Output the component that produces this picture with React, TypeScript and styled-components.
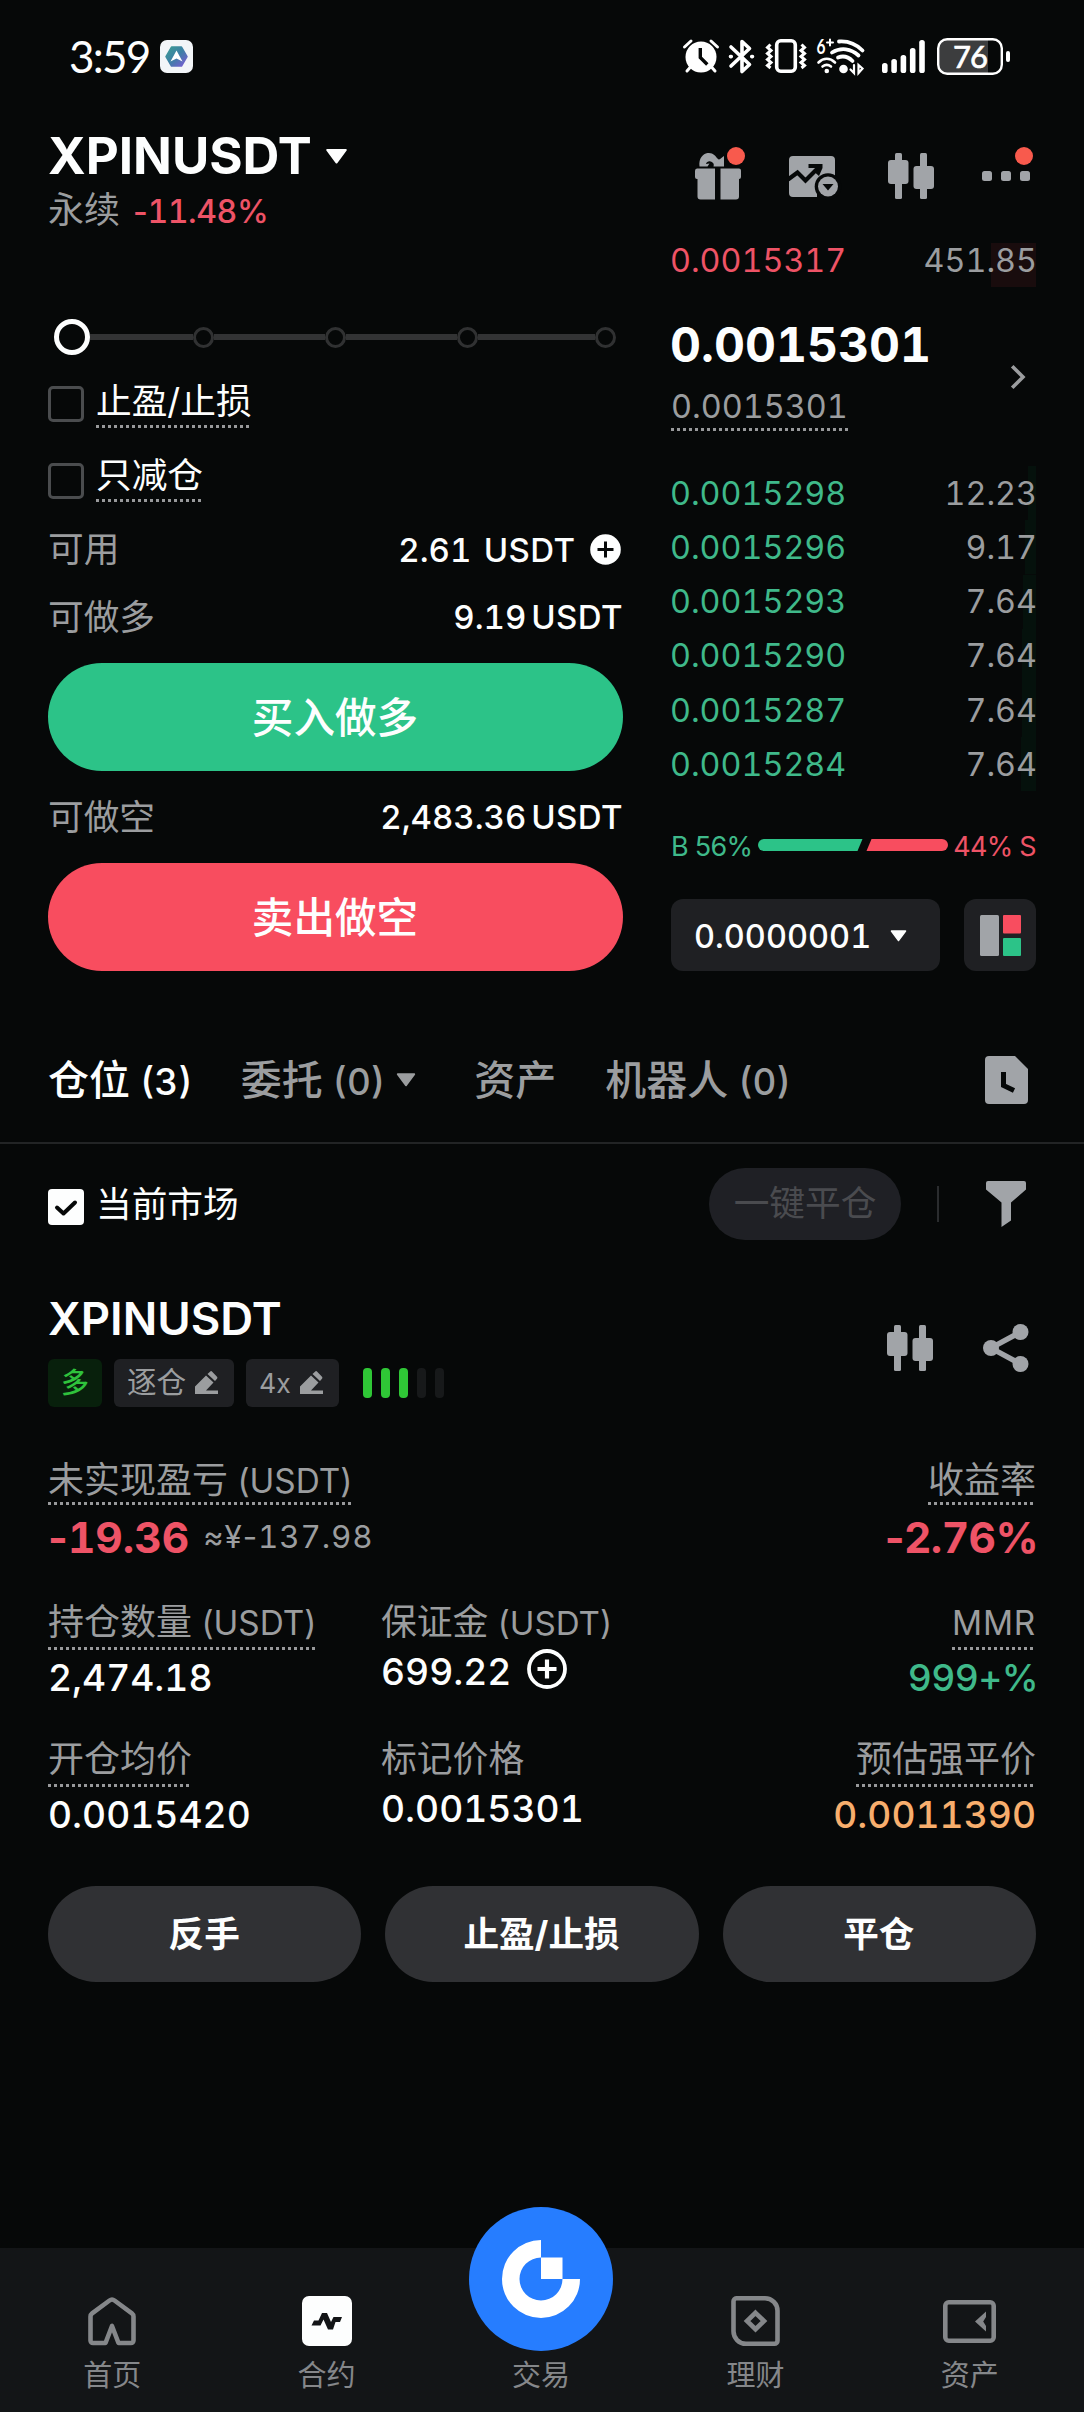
import React from "react";
import styled, { createGlobalStyle, css } from "styled-components";

const c = {
  bg: "#060808",
  white: "#fdfefe",
  grey: "#9b9d9f",
  icon: "#a1a4a8",
  green: "#2cc388",
  greenText: "#3fb98a",
  red: "#f84d5f",
  redText: "#ee5366",
  panel: "#1f2023",
  line: "#222425",
};

const GlobalStyle = createGlobalStyle`
  * { box-sizing: border-box; }
  body {
    margin: 0;
    background: ${c.bg};
    color: ${c.white};
    font-family: Inter, "Noto Sans CJK SC", sans-serif;
    font-feature-settings: "tnum";
    -webkit-font-smoothing: antialiased;
  }
  svg { display: block; flex: none; overflow: visible; }
`;

const dots = css`
  background: repeating-linear-gradient(90deg, #98999b 0 3px, transparent 3px 6px) left bottom / 100% 3px no-repeat;
`;

const Screen = styled.div`
  width: 1084px;
  height: 2412px;
  display: flex;
  flex-direction: column;
  background: ${c.bg};
  white-space: nowrap;
  overflow: hidden;
`;

/* Hyphen with its proportional width inside tabular figures. */
const Minus = styled.span`
  font-feature-settings: normal;
`;

/* ---------- status bar ---------- */
const StatusBar = styled.header`
  height: 112px;
  padding: 0 74px 0 69px;
  display: flex;
  align-items: center;
  justify-content: space-between;
`;
const StatusGroup = styled.div<{ $gap: number }>`
  display: flex;
  align-items: center;
  gap: ${(p) => p.$gap}px;
`;
const Clock = styled.span`
  font: 400 44px/56px Lato, sans-serif;
  letter-spacing: -1.8px;
  width: 81px;
`;

/* ---------- header ---------- */
const Header = styled.section`
  height: 120px;
  padding: 19px 54px 0 48px;
  display: flex;
  justify-content: space-between;
`;
const PairTitle = styled.h1`
  margin: 0;
  display: flex;
  align-items: center;
  gap: 13px;
  font-size: 51px;
  font-weight: 700;
  line-height: 50px;
`;
const PairMeta = styled.div`
  margin-top: 4px;
  display: flex;
  align-items: center;
  gap: 13px;
  font-size: 36px;
  line-height: 44px;
  color: ${c.grey};
`;
const Change = styled.span`
  font-size: 32px;
  font-weight: 500;
  letter-spacing: -0.4px;
  color: ${c.redText};
  padding-top: 5px;
`;
const HeaderIcons = styled.nav`
  height: 90px;
  display: flex;
  align-items: center;
  gap: 48.3px;
`;
const Badged = styled.span<{ $x: number; $y: number }>`
  position: relative;
  display: flex;
  &::after {
    content: "";
    position: absolute;
    left: ${(p) => p.$x}px;
    top: ${(p) => p.$y}px;
    width: 18px;
    height: 18px;
    border-radius: 50%;
    background: #f85a4d;
  }
`;

/* ---------- trade area ---------- */
const Trade = styled.section`
  height: 788px;
  padding: 0 48px;
  display: grid;
  grid-template-columns: 575px 365px;
  column-gap: 48px;
`;
const OrderForm = styled.div`
  display: flex;
  flex-direction: column;
`;
const SliderTrack = styled.div`
  height: 36px;
  margin: 87px 7px 27px 6px;
  display: flex;
  align-items: center;
`;
const Stop = styled.i<{ $active?: boolean }>`
  flex: none;
  width: ${(p) => (p.$active ? 36 : 21)}px;
  height: ${(p) => (p.$active ? 36 : 21)}px;
  border-radius: 50%;
  border: ${(p) => (p.$active ? `5px solid ${c.white}` : "3px solid #303132")};
`;
const Segment = styled.i<{ $grow: number }>`
  flex: ${(p) => p.$grow} 0 0;
  height: 6px;
  background: #323334;
`;
const CheckRow = styled.label<{ $drop: number }>`
  display: flex;
  align-items: flex-start;
  gap: 12px;
  height: 46px;
  margin-bottom: ${(p) => (p.$drop > 5 ? 20 : 28)}px;
  & > i {
    width: 36px;
    height: 36px;
    margin-top: ${(p) => p.$drop}px;
    border: 3px solid #4a4c4e;
    border-radius: 5px;
  }
`;
const Dotted = styled.span<{ $h?: number }>`
  ${dots}
  display: inline-block;
  height: ${(p) => p.$h || 46}px;
  font-size: 36px;
  line-height: 36px;
`;
const CheckText = styled(Dotted)`
  font-size: 35.7px;
  line-height: 39px;
`;
const InfoRow = styled.div<{ $h: number; $after?: number }>`
  height: ${(p) => p.$h}px;
  margin-bottom: ${(p) => p.$after || 0}px;
  display: flex;
  align-items: center;
  justify-content: space-between;
`;
const InfoLabel = styled.span`
  font-size: 35.7px;
  line-height: 40px;
  padding-bottom: 1px;
  color: ${c.grey};
`;
const Amount = styled.span<{ $gap: number }>`
  display: flex;
  align-items: center;
  gap: ${(p) => p.$gap}px;
  font-size: 33px;
  font-weight: 540;
  line-height: 40px;
  & > svg {
    margin: 0 2px 0 2px;
  }
`;
const Unit = styled.span`
  letter-spacing: 0.4px;
`;
const OrderButton = styled.button<{ $bg: string }>`
  height: 108px;
  border: 0;
  border-radius: 54px;
  padding: 0 1px 4px 0;
  background: ${(p) => p.$bg};
  color: ${c.white};
  font: 500 41.6px/60px "Noto Sans CJK SC", sans-serif;
`;

/* ---------- order book ---------- */
const Book = styled.div`
  display: flex;
  flex-direction: column;
  padding-top: 1px;
`;
const BookRow = styled.div<{ $side: "ask" | "bid"; $depth: number }>`
  height: 54.2px;
  display: flex;
  align-items: center;
  justify-content: space-between;
  font-size: 32.3px;
  color: ${c.grey};
  background: linear-gradient(${(p) => (p.$side === "ask" ? "#190c0d, #190c0d" : "#05110c, #05110c")}) right
    bottom / ${(p) => p.$depth}px ${(p) => (p.$side === "ask" ? "44px" : "100%")} no-repeat;
  & > span:first-child {
    margin-left: -1px;
    color: ${(p) => (p.$side === "ask" ? c.redText : c.greenText)};
  }
  & > span:last-child {
    margin-right: -1px;
  }
`;
const MidPrice = styled.div`
  margin: 33px 0 35px;
  display: flex;
  align-items: center;
  justify-content: space-between;
  & > svg {
    margin: 2px 11px 0 0;
  }
`;
const LastPrice = styled.div`
  font-size: 48px;
  font-weight: 700;
  line-height: 50px;
  margin: 0 0 17px -1px;
`;
const MarkPrice = styled(Dotted)`
  height: 44px;
  font-size: 32.4px;
  line-height: 39px;
  color: ${c.grey};
`;
const RatioRow = styled.div`
  margin-top: 36px;
  height: 36px;
  display: flex;
  align-items: center;
  justify-content: space-between;
  font-size: 27px;
  letter-spacing: -0.7px;
  font-feature-settings: normal;
`;
const RatioText = styled.span<{ $color: string }>`
  color: ${(p) => p.$color};
  padding-top: 2px;
`;
const BookControls = styled.div`
  margin-top: 36px;
  display: flex;
  gap: 24px;
`;
const TickSelect = styled.div`
  flex: 1;
  height: 72px;
  padding: 2px 33px 0 23px;
  border-radius: 12px;
  background: ${c.panel};
  display: flex;
  align-items: center;
  justify-content: space-between;
  font-size: 32.5px;
  font-weight: 540;
`;
const LayoutButton = styled.div`
  width: 72px;
  height: 72px;
  border-radius: 12px;
  background: ${c.panel};
  display: grid;
  place-content: center;
`;

/* ---------- tabs & filters ---------- */
const Tabs = styled.nav`
  height: 124px;
  padding: 0 56px 2px 48px;
  border-bottom: 2px solid ${c.line};
  display: flex;
  align-items: center;
  font-size: 41px;
  font-weight: 500;
`;
const Tab = styled.span<{ $active?: boolean; $gap: number }>`
  display: flex;
  align-items: center;
  gap: 11px;
  margin-right: ${(p) => p.$gap}px;
  color: ${(p) => (p.$active ? c.white : c.grey)};
  & > span {
    padding-bottom: 7px;
  }
`;
const Latin = styled.span`
  font-size: 0.9em;
`;
const Push = styled.span`
  margin-left: auto;
`;
const FilterRow = styled.div`
  height: 120px;
  padding: 0 58px 0 48px;
  display: flex;
  align-items: center;
  font-size: 35.7px;
  & > svg:first-child {
    margin-top: 5px;
  }
`;
const FilterLabel = styled.span`
  margin: -5px auto 0 12px;
`;
const CloseAll = styled.span`
  width: 192px;
  height: 72px;
  border-radius: 36px;
  background: #1f2025;
  color: #4a4b4f;
  line-height: 71px;
  text-align: center;
`;
const VRule = styled.i`
  width: 2px;
  height: 36px;
  margin: 0 47px 0 36px;
  background: #2a2c2e;
`;

/* ---------- position card ---------- */
const Card = styled.section`
  flex: 1;
  padding: 30px 48px 0;
`;
const CardHead = styled.div`
  height: 168px;
  display: flex;
  justify-content: space-between;
`;
const CardTitle = styled.h2`
  margin: 0 0 15px;
  font-size: 45.5px;
  font-weight: 600;
  line-height: 50px;
`;
const Tags = styled.div`
  display: flex;
  align-items: center;
  gap: 12px;
`;
const Tag = styled.span<{ $w: number; $long?: boolean }>`
  width: ${(p) => p.$w}px;
  height: 48px;
  border-radius: 6px;
  display: flex;
  align-items: center;
  justify-content: center;
  gap: 9px;
  padding: 0 ${(p) => (p.$long ? 0 : 3)}px 1px 0;
  font-size: ${(p) => (p.$long ? 28 : 29.6)}px;
  font-weight: ${(p) => (p.$long ? 500 : 400)};
  background: ${(p) => (p.$long ? "#08200c" : c.panel)};
  color: ${(p) => (p.$long ? "#2fc23c" : c.grey)};
`;
const TagText = styled.span`
  padding-bottom: 4px;
`;
const Meter = styled.span`
  margin-left: 12px;
  display: flex;
  gap: 9px;
`;
const MeterBar = styled.i<{ $on: boolean }>`
  width: 9px;
  height: 30px;
  border-radius: 4px;
  background: ${(p) => (p.$on ? "#2fc736" : "#17191a")};
`;
const CardIcons = styled.div`
  display: flex;
  align-items: center;
  gap: 50px;
  height: 107px;
  padding: 0 7px 0 0;
`;
const Grid = styled.div`
  display: grid;
  grid-template-columns: 333px 1fr auto;
  grid-template-rows: 142px 137px 145px;
`;
const Cell = styled.div<{ $end?: boolean; $span?: boolean }>`
  display: flex;
  flex-direction: column;
  align-items: ${(p) => (p.$end ? "flex-end" : "flex-start")};
  grid-column: ${(p) => (p.$span ? "span 2" : "auto")};
  color: ${c.grey};
`;
const PlainLabel = styled.span`
  height: 40px;
  font-size: 35.8px;
  line-height: 36px;
`;
const LabelLatin = styled.span<{ $track?: number }>`
  font-size: 0.925em;
  letter-spacing: ${(p) => p.$track || 0}px;
  font-feature-settings: normal;
`;
const Value = styled.span<{ $color?: string; $big?: boolean }>`
  display: flex;
  align-items: center;
  gap: 16px;
  color: ${(p) => p.$color || c.white};
  font-size: ${(p) => (p.$big ? 42.5 : 37.2)}px;
  font-weight: ${(p) => (p.$big ? 700 : 540)};
  line-height: ${(p) => (p.$big ? 65 : 56)}px;
  & > svg {
    margin-bottom: 6px;
  }
`;
const Ratio = styled.span`
  letter-spacing: -0.6px;
  margin-right: -2px;
`;
const Approx = styled.span`
  color: ${c.grey};
  font-size: 31.4px;
  font-weight: 400;
  letter-spacing: 0.9px;
  margin-left: -2px;
`;
const Actions = styled.div`
  display: grid;
  grid-template-columns: repeat(3, 1fr);
  gap: 24px;
`;
const Action = styled.button`
  height: 96px;
  border: 0;
  border-radius: 48px;
  padding: 1px 1px 0 0;
  background: #303134;
  color: ${c.white};
  font: 700 35.6px/50px Inter, "Noto Sans CJK SC", sans-serif;
`;

/* ---------- bottom bar ---------- */
const BottomBar = styled.nav`
  height: 164px;
  padding: 0 7px 0 5px;
  background: #131517;
  display: grid;
  grid-template-columns: repeat(5, 1fr);
`;
const NavItem = styled.div`
  display: flex;
  flex-direction: column;
  align-items: center;
  padding-top: 48px;
  font-size: 29px;
  line-height: 34px;
  color: #85878a;
`;
const NavIcon = styled.span`
  height: 50px;
  margin-bottom: 13px;
  display: flex;
  align-items: center;
`;
const TradeOrb = styled.span`
  width: 144px;
  height: 144px;
  margin: -89px 0 8px;
  border-radius: 50%;
  background: #267dff;
  display: grid;
  place-content: center;
`;

/* ---------- drawings ---------- */
const Caret = ({ w, h, fill = c.white }: { w: number; h: number; fill?: string }) => (
  <svg width={w} height={h} viewBox="0 0 24 16">
    <path d="M2 1h20L12 14.5Z" fill={fill} stroke={fill} strokeWidth="2" strokeLinejoin="round" />
  </svg>
);
const Candles = () => (
  <svg width="46" height="46" viewBox="0 0 46 46" fill={c.icon}>
    <rect x="7" y="0" width="7" height="46" rx="1.5" />
    <rect x="0" y="7" width="20.5" height="24" rx="3" />
    <rect x="32" y="0" width="7" height="46" rx="1.5" />
    <rect x="25.5" y="13" width="20.5" height="23" rx="3" />
  </svg>
);
const AppBadge = () => (
  <svg width="33" height="33" viewBox="0 0 33 33">
    <defs>
      <linearGradient id="hex" x1="0" y1="0" x2="1" y2="1">
        <stop offset="0" stopColor="#3b9c93" />
        <stop offset=".5" stopColor="#3d7fa6" />
        <stop offset="1" stopColor="#7f58d8" />
      </linearGradient>
    </defs>
    <rect width="33" height="33" rx="7" fill="#f2f5f8" />
    <path d="M11.5 7h10l5.5 9.7-5.5 9.3h-10L6 16.7Z" fill="url(#hex)" stroke="url(#hex)" strokeWidth="1.5" strokeLinejoin="round" />
    <path d="M16.5 10.5 22.5 21.5 16.5 18.5 10.5 21.5Z" fill="#fff" />
  </svg>
);
const Alarm = () => (
  <svg width="36" height="34" viewBox="0 0 36 34">
    <circle cx="18" cy="18" r="15.5" fill="#fff" />
    <path d="M1.5 8 8 2M34.5 8 28 2M7.5 28 4 32M28.5 28 32 32" stroke="#fff" strokeWidth="3" strokeLinecap="round" />
    <path d="M17.3 9v9.5l7 7" fill="none" stroke={c.bg} strokeWidth="3.4" />
  </svg>
);
const Bluetooth = () => (
  <svg width="25" height="35" viewBox="0 0 25 35" fill="none" stroke="#fff" strokeWidth="3.6" strokeLinejoin="round" strokeLinecap="round">
    <path d="M2 8 20.500 25.500 13 32.500V2.500l7.500 7L2 27" />
    <path d="M1.500 17.600h.8M22.700 17.600h.8" />
  </svg>
);
const Vibrate = () => (
  <svg width="42" height="34" viewBox="0 0 42 34" fill="none" stroke="#fff" strokeWidth="3">
    <rect x="11.7" y="1.8" width="18.6" height="30.4" rx="4" strokeWidth="3.6" />
    <path d="M5.5 5.5 2.500 8.500l3.500 3-3.500 3 3.500 3-3.500 3 3.500 3-3.500 3 3 2.500M36.500 5.500l3 3-3.500 3 3.500 3-3.500 3 3.500 3-3.500 3 3.500 3-3 2.500" />
  </svg>
);
const Wifi = () => (
  <svg width="48" height="36" viewBox="0 0 48 36" fill="none" stroke="#fff" strokeWidth="3.8" strokeLinecap="round">
    <path d="M22 3.5C31 2.8 39 6 45.500 12.500" />
    <path d="M15 14.500C24 9 34 10.500 41.500 17.500" />
    <path d="M21 19.500C26 17.500 31.500 19 35.500 23" />
    <path d="M1.500 24.500C6.500 19.500 13 19.500 18 24.500M5.500 28.500C8 26.500 11.500 26.500 14 28.500" strokeWidth="2.6" />
    <circle cx="9.800" cy="33" r="2.300" fill="#fff" stroke="none" />
    <circle cx="26.500" cy="31" r="4.300" fill="#fff" stroke="none" />
    <path d="M37 27v8l-3.500-3.500M41.500 35v-8l4 3.500Z" strokeWidth="2.200" />
    <text x="-.5" y="16" fill="#fff" stroke="none" fontFamily="Lato" fontWeight="700" fontSize="20" textLength="9" lengthAdjust="spacingAndGlyphs">6</text>
    <path d="M10 4.500h6M13 1.500v6" strokeWidth="2" />
  </svg>
);
const Signal = () => (
  <svg width="43" height="33" viewBox="0 0 43 33" fill="#fff">
    {[10, 14, 18, 25, 33].map((h, i) => (
      <rect key={h} x={i * 9.3} y={33 - h} width="5.6" height={h} rx="2.6" />
    ))}
  </svg>
);
const Battery = () => (
  <svg width="73" height="37" viewBox="0 0 73 37">
    <path d="M9 2h42v33H9a7 7 0 0 1-7-7V9a7 7 0 0 1 7-7Z" fill="#3c3d3e" />
    <rect x="1.200" y="1.200" width="63.600" height="34.600" rx="9" fill="none" stroke="#fff" strokeWidth="2.400" />
    <rect x="69" y="13" width="4" height="11" rx="2" fill="#fff" />
    <text x="33" y="29.500" fill="#fff" stroke="#fff" strokeWidth=".7" textAnchor="middle" fontFamily="Lato" fontWeight="400" fontSize="31" letterSpacing="-1">76</text>
  </svg>
);
const Gift = () => (
  <svg width="46" height="46" viewBox="0 0 46 46" fill={c.icon}>
    <path d="M4.500 13.500C3.500 5 8 1 12.500 0c5.500-.8 8 3 10 5.500C24.500 8 26.500 4.500 29 3v10.500H18.500c1-2.500-.5-4.500-3-5-2-.5-4 .5-4.500 2.500l3.500-.5-2 3Z" />
    <path d="M2 15.500h18v31H5.500a3 3 0 0 1-3-3V26H2a2 2 0 0 1-2-2v-6a2.500 2.500 0 0 1 2-2.500Z" />
    <path d="M25.500 15.500H44a2 2 0 0 1 2 2V24a2 2 0 0 1-2 2v17.500a3 3 0 0 1-3 3H25.500Z" />
  </svg>
);
const ChartBadge = () => (
  <svg width="50" height="41" viewBox="0 0 50 41">
    <path d="M4 0h38a4 4 0 0 1 4 4v17l-8.500 1.500L28 30v11H4a4 4 0 0 1-4-4V4a4 4 0 0 1 4-4Z" fill={c.icon} />
    <path d="M-1 23.500 8.500 16.500 16.500 24.500 29 12" fill="none" stroke={c.bg} strokeWidth="4.200" />
    <path d="M19.500 8h14v4l-3.500 8-4-3.500 3-4.500h-9.500Z" fill={c.bg} />
    <circle cx="39" cy="30.500" r="13.300" fill={c.bg} />
    <circle cx="39" cy="30.500" r="10" fill={c.icon} />
    <path d="M33.500 28h11L39 34.500Z" fill={c.bg} />
  </svg>
);
const More = () => (
  <svg width="48" height="10" viewBox="0 0 48 10" fill={c.icon}>
    {[0, 19, 38].map((x) => (
      <rect key={x} x={x} width="10" height="10" rx="2.500" />
    ))}
  </svg>
);
const PlusSolid = () => (
  <svg width="31" height="31" viewBox="0 0 31 31">
    <circle cx="15.500" cy="15.500" r="15.300" fill={c.white} />
    <path d="M15.500 7.500v16M7.500 15.500h16" stroke={c.bg} strokeWidth="3" />
  </svg>
);
const PlusOutline = () => (
  <svg width="40" height="40" viewBox="0 0 40 40" fill="none" stroke={c.white}>
    <circle cx="20" cy="20" r="18" strokeWidth="3.800" />
    <path d="M20 10.500v19M10.500 20h19" strokeWidth="4.200" />
  </svg>
);
const Chevron = () => (
  <svg width="14" height="24" viewBox="0 0 14 24" fill="none" stroke={c.grey} strokeWidth="3.600">
    <path d="M1.200 1.200 12 12 1.200 22.800" />
  </svg>
);
const RatioBar = () => (
  <svg width="190" height="12" viewBox="0 0 190 12">
    <path d="M6 0h98.500l-5 12H6A6 6 0 0 1 6 0Z" fill={c.green} />
    <path d="M113.500 0H184a6 6 0 0 1 0 12h-75.500Z" fill={c.red} />
  </svg>
);
const LayoutIcon = () => (
  <svg width="41" height="41" viewBox="0 0 41 41">
    <rect width="19" height="41" rx="1.500" fill={c.icon} />
    <rect x="23" width="18" height="18.500" rx="1" fill={c.red} />
    <rect x="23" y="23" width="18" height="18" rx="1" fill={c.green} />
  </svg>
);
const History = () => (
  <svg width="43" height="48" viewBox="0 0 43 48">
    <path d="M4 0h26l13 13v31a4 4 0 0 1-4 4H4a4 4 0 0 1-4-4V4a4 4 0 0 1 4-4Z" fill={c.icon} />
    <path d="M18.500 16v13.500l10.500 5" fill="none" stroke={c.bg} strokeWidth="5" />
  </svg>
);
const Funnel = () => (
  <svg width="40" height="46" viewBox="0 0 40 46">
    <path d="M2 0h36a2 2 0 0 1 2 2v6.500L25 21.500v18L15.500 46V21.500L0 8.500V2a2 2 0 0 1 2-2Z" fill={c.icon} />
  </svg>
);
const Share = () => (
  <svg width="46" height="48" viewBox="0 0 46 48" fill={c.icon}>
    <path d="M37.500 8 8 24l29.500 16" fill="none" stroke={c.icon} strokeWidth="5.400" />
    <circle cx="37.500" cy="8" r="8" />
    <circle cx="8" cy="24" r="8" />
    <circle cx="37.500" cy="40" r="8" />
  </svg>
);
const Pencil = () => (
  <svg width="23" height="23" viewBox="0 0 23 23" fill={c.grey}>
    <path d="M0 23v-7.500L11 4.500l7.500 7-7.500 8h12V23Z" />
    <path d="M12.500 3 15 .7a1.500 1.500 0 0 1 2.200 0l4.800 5a1.500 1.500 0 0 1 0 2L20 10Z" />
  </svg>
);
const CheckedBox = () => (
  <svg width="36" height="36" viewBox="0 0 36 36">
    <rect width="36" height="36" rx="4" fill={c.white} />
    <path d="M9 18.500 15.500 24.500 27 13.500" fill="none" stroke={c.bg} strokeWidth="4" strokeLinecap="round" strokeLinejoin="round" />
  </svg>
);
const HomeIcon = () => (
  <svg width="48" height="49" viewBox="0 0 48 49" fill="none" stroke="#85878a" strokeWidth="4.600" strokeLinejoin="round">
    <path d="M17.500 46H5a2.500 2.500 0 0 1-2.500-2.500V19.500a4 4 0 0 1 1.600-3.200L21.500 3.500a4 4 0 0 1 5 0l17.400 12.800a4 4 0 0 1 1.600 3.200v24A2.500 2.500 0 0 1 43 46H30.500L24 29Z" />
  </svg>
);
const FuturesIcon = () => (
  <svg width="50" height="50" viewBox="0 0 50 50">
    <rect width="50" height="50" rx="7" fill={c.white} />
    <path d="m9.500 29.500 2.500-5h4.500l3.500-7.500h5l4 9 2.500-5h8.500L38 26h-4.500L31 33.500h-5l-4.500-10-3 6Z" fill="#131517" />
  </svg>
);
const OrbLogo = () => (
  <svg width="78" height="78" viewBox="0 0 78 78" fill="#fff">
    <path d="M39 0A39 39 0 1 0 78 39H60.500A21.500 21.500 0 1 1 39 17.500Z" />
    <rect x="39" y="17.500" width="21.500" height="21.500" />
  </svg>
);
const EarnIcon = () => (
  <svg width="49" height="50" viewBox="0 0 49 50" fill="none" stroke="#85878a" strokeWidth="4.600">
    <path d="M5.300 2.300H34a12.500 12.500 0 0 1 12.500 12.500v30a3 3 0 0 1-3 3H15A12.500 12.500 0 0 1 2.500 35V5.300a3 3 0 0 1 2.800-3Z" />
    <path d="M24.500 16.800 33 25l-8.500 8.200L16 25Z" />
  </svg>
);
const WalletIcon = () => (
  <svg width="53" height="43" viewBox="0 0 53 43">
    <rect x="2.300" y="2.300" width="48.400" height="38.400" rx="3.500" fill="none" stroke="#85878a" strokeWidth="4.600" />
    <path d="M43 11.500v5.500l-2.800 4.500L43 26v5.500L32 21.500Z" fill="#85878a" />
  </svg>
);

/* ---------- data ---------- */
const bids: [string, string, number][] = [
  ["0.0015298", "12.23", 8],
  ["0.0015296", "9.17", 11],
  ["0.0015293", "7.64", 13],
  ["0.0015290", "7.64", 14],
  ["0.0015287", "7.64", 14],
  ["0.0015284", "7.64", 15],
];
const sliderSegments = [103, 111, 111, 117];

export default function App() {
  return (
    <Screen>
      <GlobalStyle />
      <StatusBar>
        <StatusGroup $gap={10}>
          <Clock>3:59</Clock>
          <AppBadge />
        </StatusGroup>
        <StatusGroup $gap={17}>
          <StatusGroup $gap={10.3}>
            <Alarm />
            <Bluetooth />
            <Vibrate />
            <Wifi />
          </StatusGroup>
          <StatusGroup $gap={12}>
            <Signal />
            <Battery />
          </StatusGroup>
        </StatusGroup>
      </StatusBar>

      <Header>
        <div>
          <PairTitle>
            XPINUSDT <Caret w={23} h={15} />
          </PairTitle>
          <PairMeta>
            永续
            <Change>
              <Minus>-</Minus>11.48%
            </Change>
          </PairMeta>
        </div>
        <HeaderIcons>
          <Badged $x={32} $y={-6}>
            <Gift />
          </Badged>
          <ChartBadge />
          <Candles />
          <Badged $x={33} $y={-24}>
            <More />
          </Badged>
        </HeaderIcons>
      </Header>

      <Trade>
        <OrderForm>
          <SliderTrack>
            <Stop $active />
            {sliderSegments.map((grow, i) => (
              <React.Fragment key={i}>
                <Segment $grow={grow} />
                <Stop />
              </React.Fragment>
            ))}
          </SliderTrack>
          <CheckRow $drop={4}>
            <i />
            <CheckText>止盈/止损</CheckText>
          </CheckRow>
          <CheckRow $drop={7}>
            <i />
            <CheckText>只减仓</CheckText>
          </CheckRow>
          <InfoRow $h={55}>
            <InfoLabel>可用</InfoLabel>
            <Amount $gap={12.5}>
              <span>2.61</span>
              <Unit>USDT</Unit>
              <PlusSolid />
            </Amount>
          </InfoRow>
          <InfoRow $h={80} $after={6}>
            <InfoLabel>可做多</InfoLabel>
            <Amount $gap={5}>
              <span>9.19</span>
              <Unit>USDT</Unit>
            </Amount>
          </InfoRow>
          <OrderButton $bg={c.green}>买入做多</OrderButton>
          <InfoRow $h={92}>
            <InfoLabel>可做空</InfoLabel>
            <Amount $gap={5}>
              <span>2,483.36</span>
              <Unit>USDT</Unit>
            </Amount>
          </InfoRow>
          <OrderButton $bg={c.red}>卖出做空</OrderButton>
        </OrderForm>

        <Book>
          <BookRow $side="ask" $depth={45}>
            <span>0.0015317</span>
            <span>451.85</span>
          </BookRow>
          <MidPrice>
            <div>
              <LastPrice>0.0015301</LastPrice>
              <MarkPrice>0.0015301</MarkPrice>
            </div>
            <Chevron />
          </MidPrice>
          {bids.map(([price, size, depth]) => (
            <BookRow key={price} $side="bid" $depth={depth}>
              <span>{price}</span>
              <span>{size}</span>
            </BookRow>
          ))}
          <RatioRow>
            <RatioText $color={c.greenText}>B 56%</RatioText>
            <RatioBar />
            <RatioText $color={c.redText}>44% S</RatioText>
          </RatioRow>
          <BookControls>
            <TickSelect>
              0.0000001 <Caret w={17} h={12} />
            </TickSelect>
            <LayoutButton>
              <LayoutIcon />
            </LayoutButton>
          </BookControls>
        </Book>
      </Trade>

      <Tabs>
        <Tab $active $gap={48}>
          <span>
            仓位<Latin> (3)</Latin>
          </span>
        </Tab>
        <Tab $gap={58}>
          <span>
            委托<Latin> (0)</Latin>
          </span>
          <Caret w={20} h={14} fill={c.grey} />
        </Tab>
        <Tab $gap={49}>
          <span>资产</span>
        </Tab>
        <Tab $gap={0}>
          <span>
            机器人<Latin> (0)</Latin>
          </span>
        </Tab>
        <Push>
          <History />
        </Push>
      </Tabs>

      <FilterRow>
        <CheckedBox />
        <FilterLabel>当前市场</FilterLabel>
        <CloseAll>一键平仓</CloseAll>
        <VRule />
        <Funnel />
      </FilterRow>

      <Card>
        <CardHead>
          <div>
            <CardTitle>XPINUSDT</CardTitle>
            <Tags>
              <Tag $w={54} $long>
                <TagText>多</TagText>
              </Tag>
              <Tag $w={120}>
                <TagText>逐仓</TagText>
                <Pencil />
              </Tag>
              <Tag $w={93}>
                <Latin>4x</Latin>
                <Pencil />
              </Tag>
              <Meter>
                {[true, true, true, false, false].map((on, i) => (
                  <MeterBar key={i} $on={on} />
                ))}
              </Meter>
            </Tags>
          </div>
          <CardIcons>
            <Candles />
            <Share />
          </CardIcons>
        </CardHead>

        <Grid>
          <Cell $span>
            <Dotted $h={43}>
              未实现盈亏<LabelLatin> (USDT)</LabelLatin>
            </Dotted>
            <Value $big $color={c.redText}>
              <span>
                <Minus>-</Minus>19.36
              </span>
              <Approx>
                ≈¥<Minus>-</Minus>137.98
              </Approx>
            </Value>
          </Cell>
          <Cell $end>
            <Dotted $h={43}>收益率</Dotted>
            <Value $big $color={c.redText}>
              <Ratio>
                <Minus>-</Minus>2.76%
              </Ratio>
            </Value>
          </Cell>
          <Cell>
            <Dotted>
              持仓数量<LabelLatin> (USDT)</LabelLatin>
            </Dotted>
            <Value>2,474.18</Value>
          </Cell>
          <Cell>
            <PlainLabel>
              保证金<LabelLatin> (USDT)</LabelLatin>
            </PlainLabel>
            <Value>
              699.22 <PlusOutline />
            </Value>
          </Cell>
          <Cell $end>
            <Dotted>
              <LabelLatin $track={0.8}>MMR</LabelLatin>
            </Dotted>
            <Value $color={c.greenText}>
              <Ratio>999+%</Ratio>
            </Value>
          </Cell>
          <Cell>
            <Dotted>开仓均价</Dotted>
            <Value>0.0015420</Value>
          </Cell>
          <Cell>
            <PlainLabel>标记价格</PlainLabel>
            <Value>0.0015301</Value>
          </Cell>
          <Cell $end>
            <Dotted>预估强平价</Dotted>
            <Value $color="#f8ae6d">0.0011390</Value>
          </Cell>
        </Grid>

        <Actions>
          <Action>反手</Action>
          <Action>止盈/止损</Action>
          <Action>平仓</Action>
        </Actions>
      </Card>

      <BottomBar>
        <NavItem>
          <NavIcon>
            <HomeIcon />
          </NavIcon>
          首页
        </NavItem>
        <NavItem>
          <NavIcon>
            <FuturesIcon />
          </NavIcon>
          合约
        </NavItem>
        <NavItem>
          <TradeOrb>
            <OrbLogo />
          </TradeOrb>
          交易
        </NavItem>
        <NavItem>
          <NavIcon>
            <EarnIcon />
          </NavIcon>
          理财
        </NavItem>
        <NavItem>
          <NavIcon>
            <WalletIcon />
          </NavIcon>
          资产
        </NavItem>
      </BottomBar>
    </Screen>
  );
}
